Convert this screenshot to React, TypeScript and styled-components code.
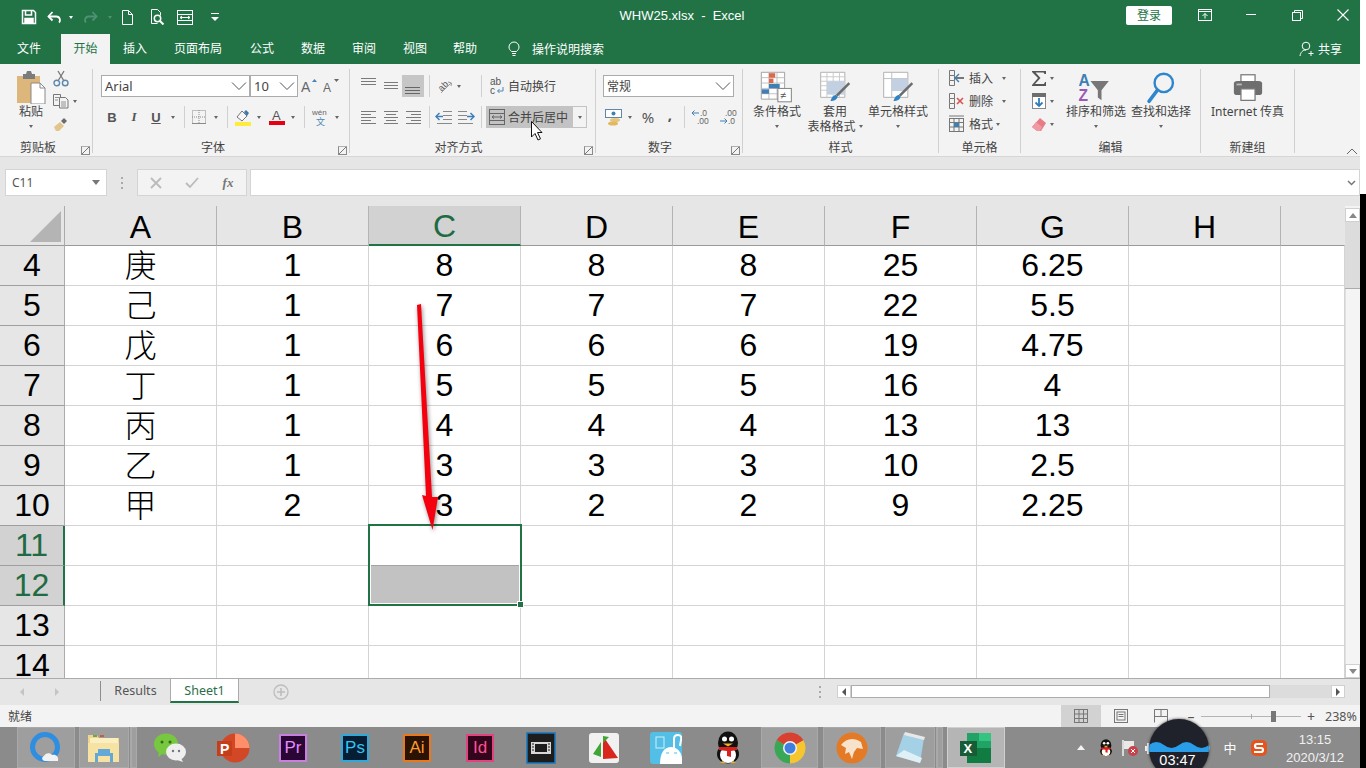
import React from "react";
import styled, { createGlobalStyle } from "styled-components";

const UI = `"Noto Sans","Noto Sans CJK SC",sans-serif`;
const GREEN = "#217346";

const Global = createGlobalStyle`
  html, body { margin: 0; padding: 0; width: 1366px; height: 768px; overflow: hidden; background: #fff; }
  * { box-sizing: border-box; }
`;

const Screen = styled.div`
  position: relative; display: flex; width: 1366px; height: 768px; overflow: hidden;
  font-family: ${UI}; font-size: 12px; color: #444;
`;
const Win = styled.div`display: flex; flex-direction: column; width: 1360px; height: 768px; flex: none;`;
const EdgeStrip = styled.div`width: 6px; height: 768px; flex: none; background: linear-gradient(#fff 194px, #000 194px);`;

/* title bar */
const TitleBar = styled.div`height: 34px; background: ${GREEN}; display: flex; align-items: center; color: #fff; flex: none;`;
const QatSlot = styled.div<{ $w: number }>`width: ${p => p.$w}px; height: 24px; display: flex; align-items: center; justify-content: center; flex: none;`;
const TitleText = styled.div`width: 270px; margin-left: 313px; text-align: center; font-family: "Liberation Sans", sans-serif; font-size: 13px; white-space: pre; margin-top: -4px; flex: none;`;
const SignIn = styled.div`width: 46px; height: 19px; margin-left: 309px; margin-top: -3px; background: #fff; border-radius: 2px; color: ${GREEN}; text-align: center; line-height: 19px; font-size: 12px; flex: none;`;
const WinBtn = styled.div<{ $ml?: number }>`width: 46px; height: 24px; margin-left: ${p => p.$ml || 0}px; margin-top: -4px; display: flex; align-items: center; justify-content: center; flex: none;`;

/* tabs */
const TabBar = styled.div`height: 30px; background: ${GREEN}; display: flex; color: #fff; flex: none;`;
const Tab = styled.div<{ $w: number; $active?: boolean }>`
  width: ${p => p.$w}px; flex: none; text-align: center; line-height: 29px; font-size: 12px;
  background: ${p => (p.$active ? "#f3f3f3" : "transparent")}; color: ${p => (p.$active ? GREEN : "#fff")};
`;
const TellMe = styled.div`display: flex; align-items: center; margin-left: 18px; width: 115px; gap: 12px; height: 29px; white-space: nowrap; flex: none;`;
const Share = styled.div`display: flex; align-items: center; gap: 3px; margin-left: 676px; height: 29px; white-space: nowrap; flex: none;`;

/* ribbon */
const Ribbon = styled.div`height: 93px; background: #f3f3f3; border-bottom: 1px solid #d6d6d6; display: flex; position: relative; flex: none;`;
const Group = styled.div<{ $w: number }>`
  width: ${p => p.$w}px; flex: none; height: 84px; margin-top: 5px; border-right: 1px solid #d0d0d0;
  display: grid; grid-template-rows: 69px 15px; position: relative;
`;
const GroupBody = styled.div`display: flex; min-width: 0; overflow: visible;`;
const GroupLabel = styled.div<{ $pr?: number }>`position: relative; display: flex; justify-content: center; align-items: center; height: 15px; font-size: 12px; color: #444; line-height: 15px; margin-top: 2px; padding-right: ${p => p.$pr || 0}px;`;
const Launcher = styled.span`position: absolute; right: 2px; bottom: 0; width: 9px; height: 9px; border: 1px solid #8a8a8a; border-top-color:#b0b0b0; background: linear-gradient(135deg, transparent 45%, #777 45%, #777 55%, transparent 55%);`;
const Stack = styled.div<{ $pad?: number }>`display: flex; flex-direction: column; padding-left: ${p => p.$pad || 0}px; flex: none;`;
const TwoRows = styled(Stack)`padding-top: 6px; gap: 9px;`;
const Line = styled.div`display: flex; align-items: center; height: 22px; flex: none;`;
const ThreeRows = styled(Stack)`gap: 5px;`;
const ThinLine = styled.div`display: flex; align-items: center; height: 18px; flex: none;`;
const Slot = styled.div<{ $w: number; $on?: boolean }>`width: ${p => p.$w}px; height: 22px; flex: none; display: flex; align-items: center; justify-content: center; background: ${p => (p.$on ? "#c6c6c6" : "transparent")};`;
const PercentSlot = styled(Slot)`font-size: 15px; color: #555;`;
const CommaSlot = styled(Slot)`font-size: 15px; font-weight: 700; color: #555; padding-bottom: 6px;`;
const Sep = styled.span<{ $l?: number; $r?: number }>`width: 1px; height: 22px; background: #d0d0d0; flex: none; margin: 0 ${p => p.$r ?? 5}px 0 ${p => p.$l ?? 5}px;`;
const Caret = styled.span`width: 0; height: 0; border-left: 2.5px solid transparent; border-right: 2.5px solid transparent; border-top: 3px solid #666; display: inline-block; flex: none;`;
const QatCaret = styled.span<{ $dim?: boolean }>`width: 0; height: 0; border-left: 2.5px solid transparent; border-right: 2.5px solid transparent; border-top: 3px solid ${p => (p.$dim ? "#4f9272" : "#fff")}; display: inline-block; flex: none;`;
const CaretSlot = styled.div<{ $w?: number }>`width: ${p => p.$w || 10}px; height: 22px; display: flex; align-items: center; justify-content: center; flex: none;`;
const Select = styled.div<{ $w: number; $small?: boolean }>`
  width: ${p => p.$w}px; height: 22px; flex: none; background: #fff; border: 1px solid #ababab;
  display: flex; align-items: center; justify-content: space-between; padding: 0 2px 0 3px; font-size: ${p => (p.$small ? 12 : 13)}px; color: #444;
`;
const BoldBtn = styled.span<{ $i?: boolean; $u?: boolean }>`
  font-family: "Liberation ${p => (p.$i ? "Serif" : "Sans")}", serif; font-weight: 700; font-style: ${p => (p.$i ? "italic" : "normal")};
  font-size: 13px; color: #555; text-decoration: ${p => (p.$u ? "underline" : "none")};
`;
const LargeBtn = styled.div<{ $w: number; $pl?: number; $ml?: number }>`width: ${p => p.$w}px; margin-left: ${p => p.$ml || 0}px; padding: 2px 0 0 ${p => p.$pl || 0}px; display: flex; flex-direction: column; align-items: center; flex: none;`;
const LargeIcon = styled.div`height: 33px; display: flex; align-items: center; justify-content: center; flex: none;`;
const LargeText = styled.div`font-size: 12px; line-height: 15px; text-align: center; white-space: nowrap; display: flex; flex-direction: column; align-items: center;`;
const TextRow = styled.div`display: flex; align-items: center; gap: 3px; height: 15px; justify-content: center; white-space: nowrap;`;
const CaretRow = styled.div`height: 15px; display: flex; align-items: center; justify-content: center;`;
const MergeBtn = styled.div`width: 101px; height: 22px; display: flex; align-items: center; background: #c3c3c3; flex: none; gap: 3px; padding-left: 3px; position: relative;`;
const MergeDrop = styled.div`position: absolute; right: 0; top: 0; width: 15px; height: 22px; background: #f3f3f3; border: 1px solid #c3c3c3; display: flex; align-items: center; justify-content: center;`;
const Wrap = styled.div`display: flex; align-items: center; gap: 3px; height: 22px; white-space: nowrap; padding-left: 3px;`;
const CellRow = styled(ThinLine)`gap: 3px; white-space: nowrap;`;
const Collapse = styled.div`position: absolute; right: 2px; bottom: 1px; width: 12px; height: 8px; display: flex;`;

/* formula bar */
const FormulaBar = styled.div`height: 49px; background: #e6e6e6; display: flex; padding-top: 12px; flex: none;`;
const NameBox = styled.div`width: 102px; height: 27px; margin-left: 5px; background: #fff; border: 1px solid #d4d4d4; display: flex; align-items: center; justify-content: space-between; padding: 0 6px 0 6px; font-size: 12px; color: #555; flex: none;`;
const Dots = styled.div`width: 20px; height: 22px; display: flex; flex-direction: column; align-items: center; justify-content: center; gap: 3px; flex: none;`;
const DotsWide = styled(Dots)`width: 30px; height: 27px;`;
const Dot = styled.span`width: 2px; height: 2px; background: #aaa;`;
const FxBox = styled.div`width: 110px; height: 27px; background: #f3f3f3; border: 1px solid #d4d4d4; display: flex; align-items: center; flex: none;`;
const FxSlot = styled.div`flex: 1; display: flex; align-items: center; justify-content: center; color: #777; font-family: "Liberation Serif", serif; font-style: italic; font-weight: 700; font-size: 13px;`;
const FormulaInput = styled.div`width: 1110px; margin-left: 3px; height: 27px; background: #fff; border: 1px solid #d4d4d4; display: flex; align-items: center; justify-content: flex-end; padding-right: 3px; flex: none;`;

/* sheet */
const SheetArea = styled.div`height: 472px; display: flex; background: #e6e6e6; flex: none;`;
const GridClip = styled.div`width: 1345px; height: 472px; overflow: hidden; flex: none; position: relative;`;
const Grid = styled.div`
  display: grid; grid-template-columns: 65px repeat(8, 152px) 64px; grid-auto-rows: 40px; background: #fff;
  font-family: "Liberation Sans", sans-serif; font-size: 32px; color: #000;
`;
const Corner = styled.div`background: #e6e6e6; border-right: 1px solid #ababab; border-bottom: 1px solid #9a9a9a; display: flex; align-items: flex-end; justify-content: flex-end; padding: 0 3px 3px 0;`;
const ColHead = styled.div<{ $sel?: boolean; $end?: boolean }>`
  display: flex; align-items: center; justify-content: center; padding-top: 3px;
  background: ${p => (p.$sel ? "#d2d2d2" : "#e6e6e6")}; color: ${p => (p.$sel ? "#1f6b43" : "#000")};
  border-right: 1px solid ${p => (p.$end ? "transparent" : "#b4b4b4")};
  border-bottom: ${p => (p.$sel ? `2px solid ${GREEN}` : "1px solid #9a9a9a")};
`;
const RowHead = styled.div<{ $sel?: boolean }>`
  display: flex; align-items: center; justify-content: center; line-height: 1; padding-bottom: 2px;
  background: ${p => (p.$sel ? "#d2d2d2" : "#e6e6e6")}; color: ${p => (p.$sel ? "#1f6b43" : "#000")};
  border-right: ${p => (p.$sel ? `2px solid ${GREEN}` : "1px solid #ababab")}; border-bottom: 1px solid #9f9f9f;
`;
const Cell = styled.div<{ $cjk?: boolean }>`
  display: flex; align-items: center; justify-content: center; background: #fff; line-height: 1;
  border-right: 1px solid #d4d4d4; border-bottom: 1px solid #d4d4d4;
  padding-bottom: ${p => (p.$cjk ? 6 : 2)}px;
  font-family: ${p => (p.$cjk ? `"Noto Sans CJK SC", sans-serif` : `"Liberation Sans", sans-serif`)};
  font-weight: ${p => (p.$cjk ? 300 : 400)};
`;
const Selection = styled.div`
  grid-column: 4; grid-row: 9 / span 2; margin: -2px -1px 0 -1px; border: 2px solid ${GREEN}; position: relative; z-index: 2; background: #fff;
  display: grid; grid-template-rows: 1fr 1fr; padding: 0 1px 1px 1px;
`;
const SelGray = styled.div`grid-row: 2; background: #c2c2c2; border-top: 1px solid #a4a4a4;`;
const Handle = styled.span`position: absolute; right: -4px; bottom: -4px; background: ${GREEN}; border: 1px solid #fff; box-sizing: content-box; width: 5px; height: 5px;`;

const VScroll = styled.div`width: 15px; height: 472px; flex: none; display: flex; flex-direction: column; background: #f3f3f3; padding-top: 2px;`;
const ScrollBtn = styled.div`width: 15px; height: 14px; background: #fff; border: 1px solid #d0d0d0; display: flex; align-items: center; justify-content: center; flex: none;`;
const VThumb = styled.div`height: 67px; background: #dcdcdc; border-bottom: 1px solid #ababab; flex: none;`;
const VTrack = styled.div`flex: 1; background: #f4f4f4; border-left: 1px solid #e0e0e0;`;

/* sheet tabs */
const SheetTabs = styled.div`height: 27px; background: #e6e6e6; border-top: 1px solid #ababab; display: flex; align-items: flex-start; flex: none;`;
const NavSlot = styled.div<{ $w: number }>`width: ${p => p.$w}px; height: 25px; display: flex; align-items: center; justify-content: center; flex: none;`;
const TabSep = styled.span`width: 1px; height: 20px; margin-top: 2px; background: #8e8e8e; flex: none;`;
const SheetTab = styled.div<{ $active?: boolean; $w: number }>`
  width: ${p => p.$w}px; height: 24px; flex: none; text-align: center; line-height: 23px; font-size: 12.5px;
  color: ${p => (p.$active ? "#2b6e4a" : "#555")}; background: ${p => (p.$active ? "#fff" : "transparent")};
  border-bottom: ${p => (p.$active ? `2px solid ${GREEN}` : "none")};
  border-right: ${p => (p.$active ? "1px solid #ababab" : "none")}; border-left: ${p => (p.$active ? "1px solid #ababab" : "none")};
`;
const HScroll = styled.div`width: 508px; height: 13px; margin-top: 6px; display: flex; flex: none; background: #dcdcdc;`;
const HBtn = styled.div`width: 14px; height: 13px; background: #fff; border: 1px solid #d0d0d0; display: flex; align-items: center; justify-content: center; flex: none;`;
const HThumb = styled.div`width: 419px; height: 13px; background: #fff; border: 1px solid #ababab; flex: none;`;
const HGap = styled.div`flex: 1;`;
const Tri = styled.span<{ $d: "l" | "r" | "u" | "d"; $c?: string }>`
  width: 0; height: 0; display: inline-block; flex: none;
  ${p => p.$d === "l" && `border-top:4px solid transparent;border-bottom:4px solid transparent;border-right:4px solid ${p.$c || "#999"};`}
  ${p => p.$d === "r" && `border-top:4px solid transparent;border-bottom:4px solid transparent;border-left:4px solid ${p.$c || "#999"};`}
  ${p => p.$d === "u" && `border-left:4px solid transparent;border-right:4px solid transparent;border-bottom:5px solid ${p.$c || "#888"};`}
  ${p => p.$d === "d" && `border-left:4px solid transparent;border-right:4px solid transparent;border-top:5px solid ${p.$c || "#888"};`}
`;

/* status */
const StatusBar = styled.div`height: 22px; background: #f3f3f3; display: flex; align-items: center; flex: none; font-size: 12px; color: #444;`;
const StatusText = styled.div`width: 1061px; padding-left: 8px; flex: none;`;
const ViewBtn = styled.div<{ $on?: boolean }>`width: 40px; height: 22px; flex: none; display: flex; align-items: center; justify-content: center; background: ${p => (p.$on ? "#d2d2d2" : "transparent")};`;
const ZoomMark = styled.div`width: 20px; text-align: center; font-size: 14px; color: #555; flex: none;`;
const ZoomTrack = styled.div`width: 100px; height: 1px; background: #b4b4b4; position: relative; flex: none;`;
const ZoomThumb = styled.span`position: absolute; left: 70px; top: -5px; width: 5px; height: 11px; background: #777;`;
const ZoomTick = styled.span`position: absolute; left: 50px; top: -2px; width: 1px; height: 5px; background: #aaa;`;
const ZoomText = styled.div`margin-left: 4px; color: #555; font-size: 12.5px; white-space: nowrap;`;

/* taskbar */
const Taskbar = styled.div`height: 41px; background: #8b8b8b; display: flex; align-items: stretch; flex: none; color: #fff;`;
const TaskItem = styled.div<{ $w: number; $ml?: number; $st?: "on" | "hot" }>`
  width: ${p => p.$w}px; margin-left: ${p => p.$ml || 0}px; flex: none; display: flex; align-items: center; justify-content: center; position: relative;
  background: ${p => (p.$st === "on" ? "#9e9e9e" : p.$st === "hot" ? "#b5b5b5" : "transparent")};
  border: ${p => (p.$st === "on" ? "1px solid #a9a9a9" : p.$st === "hot" ? "1px solid #d0d0d0" : "none")};
`;
const TaskStack = styled.div`width: 7px; margin-left: 1px; flex: none; border: 1px solid #a9a9a9; border-left-width: 2px; background: #9e9e9e;`;
const AdobeTile = styled.div<{ $bg: string; $bd: string; $fg: string }>`
  width: 28px; height: 28px; background: ${p => p.$bg}; border: 2px solid ${p => p.$bd}; color: ${p => p.$fg};
  font-family: "Liberation Sans", sans-serif; font-size: 17px; line-height: 24px; text-align: center;
`;
const Tray = styled.div<{ $w: number; $ml?: number }>`width: ${p => p.$w}px; margin-left: ${p => p.$ml || 0}px; flex: none; display: flex; align-items: center; justify-content: center;`;
const Ime = styled.div`font-size: 13px; color: #fff;`;
const Clock = styled.div`width: 80px; margin-left: 4px; text-align: center; font-size: 13px; line-height: 18px; color: #f1f1f1; flex: none; padding-top: 4px; font-family: "Liberation Sans", sans-serif;`;

/* overlays */
const ArrowLayer = styled.svg`position: absolute; left: 400px; top: 295px; z-index: 5; pointer-events: none; filter: drop-shadow(1px 2px 2px rgba(0,0,0,.45));`;
const CursorLayer = styled.svg`position: absolute; left: 530px; top: 120px; z-index: 6;`;
const Timer = styled.div`
  position: absolute; left: 1149px; top: 719px; width: 60px; height: 60px; border-radius: 50%; z-index: 6; overflow: hidden;
  background: #20222b; box-shadow: 0 0 3px #333;
`;
const TimerWave = styled.svg`position: absolute; left: 0; top: 23px;`;
const TimerText = styled.div`position: absolute; left: 0; right: 3px; top: 33px; text-align: center; color: #fff; font-size: 14.5px; font-family: "Liberation Sans", sans-serif;`;
const Mirrored = styled.svg`transform: scaleX(-1);`;

/* --- icons --- */
const Chev = ({ c = "#555" }: { c?: string }) => (
  <svg width="16" height="10" viewBox="0 0 16 10"><path d="M1 1.500 8 8.500 15 1.500" fill="none" stroke={c} strokeWidth="1" /></svg>
);
const SmallChev = () => (
  <svg width="9" height="6" viewBox="0 0 9 6"><path d="M1 1l3.500 3.500L8 1" fill="none" stroke="#777" strokeWidth="1.500" /></svg>
);
const AlignLines = ({ lines, c = "#7a7a7a" }: { lines: number[][]; c?: string }) => (
  <svg width="18" height="18" viewBox="0 0 18 18">{lines.map((l, i) => <path key={i} d={`M${l[0]} ${l[2]}.5H${l[1]}`} stroke={c} fill="none" />)}</svg>
);
const SaveIcon = () => (
  <svg width="16" height="16" viewBox="0 0 16 16" fill="none" stroke="#fff" strokeWidth="1.500">
    <path d="M1.500 1.500h11l2 2v11h-13z" /><path d="M4.500 2v4h6V2" /><path d="M4 14.500V9.500h8v5" fill="#fff" stroke="none" /><path d="M4 14.500V9.500h8v5" />
  </svg>
);
const UndoPaths = () => (<><path d="M1.500 6.500H9a4 4 0 0 1 4 3.500c0 1-.5 2-1 2.500" /><path d="M5.500 2 1.500 6.500 5.500 10.500" /></>);
const UndoIcon = () => <svg width="15" height="14" viewBox="0 0 15 14" fill="none" stroke="#fff" strokeWidth="1.800"><UndoPaths /></svg>;
const RedoIcon = () => <Mirrored width="15" height="14" viewBox="0 0 15 14" fill="none" stroke="#4f9272" strokeWidth="1.800"><UndoPaths /></Mirrored>;
const NewDoc = () => (
  <svg width="13" height="15" viewBox="0 0 13 15" fill="none" stroke="#fff"><path d="M1.500.5h6l4 4v10h-10z" /><path d="M7.500.5v4h4" /></svg>
);
const PreviewIcon = () => (
  <svg width="16" height="16" viewBox="0 0 16 16" fill="none" stroke="#fff"><path d="M2.500 14.500V.5h6l3 3v3" /><path d="M2.500 14.500h6" /><circle cx="8.500" cy="9.500" r="3.200" strokeWidth="1.500" /><path d="M11 12l3.500 3.500" strokeWidth="2" /></svg>
);
const LayoutIcon = () => (
  <svg width="16" height="15" viewBox="0 0 16 15" fill="none" stroke="#fff"><rect x=".5" y=".5" width="15" height="14" /><path d="M.5 4.500h15M.5 10.500h15M3 7.500h10M3 7.500l2-1.500M3 7.500l2 1.500M13 7.500l-2-1.500M13 7.500l-2 1.500" /></svg>
);
const CustomizeIcon = () => (
  <svg width="10" height="9" viewBox="0 0 10 9" fill="#fff"><path d="M1 0h8v1H1z" /><path d="M1 4h8L5 8z" /></svg>
);
const WinRestoreDown = () => (
  <svg width="14" height="12" viewBox="0 0 14 12" fill="none" stroke="#fff"><rect x=".5" y=".5" width="13" height="11" /><path d="M.5 2.500h13" /><path d="M7 9.500V4.500M4.500 7 7 4.500 9.500 7" /></svg>
);
const WinMin = () => <svg width="10" height="2" viewBox="0 0 10 2"><path d="M0 .5h10" stroke="#fff" /></svg>;
const WinMax = () => (
  <svg width="11" height="11" viewBox="0 0 11 11" fill="none" stroke="#fff"><rect x=".5" y="2.500" width="8" height="8" /><path d="M2.500 2.500v-2h8v8h-2" /></svg>
);
const WinClose = () => <svg width="12" height="12" viewBox="0 0 12 12"><path d="M.5.5l11 11M11.500.5l-11 11" stroke="#fff" fill="none" strokeWidth="1.100" /></svg>;
const Bulb = () => (
  <svg width="12" height="16" viewBox="0 0 12 16" fill="none" stroke="#fff"><path d="M3.500 10.500C2 9 1 8 1 6a5 5 0 0 1 10 0c0 2-1 3-2.500 4.500z" /><path d="M4 12.500h4M4.500 14.500h3" /></svg>
);
const ShareIcon = () => (
  <svg width="16" height="16" viewBox="0 0 16 16" fill="none" stroke="#fff"><circle cx="7" cy="5" r="3.800" /><path d="M1 15c.5-3.500 2.500-6 6-6" /><path d="M9.500 12.500h5M12 10v5" /></svg>
);
const PasteIcon = () => (
  <svg width="30" height="33" viewBox="0 0 30 33">
    <path d="M1 5h23v27H1z" fill="#dcb67a" /><path d="M7 3h3l1-3h4l1 3h3v5H7z" fill="#7b7b7b" />
    <path d="M15 12h9l5 5v16H15z" fill="#fff" stroke="#8a8a8a" /><path d="M24 12v5h5" fill="none" stroke="#8a8a8a" />
  </svg>
);
const Scissors = () => (
  <svg width="16" height="17" viewBox="0 0 16 17" fill="none"><path d="M5 1l6 10M11 1 5 11" stroke="#777" strokeWidth="1.300" /><circle cx="3.800" cy="13" r="2.800" stroke="#5d87ad" strokeWidth="1.400" /><circle cx="12.200" cy="13" r="2.800" stroke="#5d87ad" strokeWidth="1.400" /></svg>
);
const CopyIcon = () => (
  <svg width="16" height="16" viewBox="0 0 16 16" fill="#f3f3f3" stroke="#777"><path d="M.5 1.500h7v11h-7z" /><path d="M6.500 4.500h6l2.500 2.500v8H6.500z" /><path d="M2 4.500h4M2 7h3M8 9h5M8 11h5M8 13h5" fill="none" strokeWidth=".8" /></svg>
);
const BrushIcon = () => (
  <svg width="16" height="16" viewBox="0 0 16 16"><path d="M1 11l6-5 4 4-5 5H3z" fill="#e2c48d" /><path d="M8 5l3-3 3 3-3 3z" fill="#6b6b6b" /></svg>
);
const FontUp = ({ up }: { up: boolean }) => (
  <svg width="18" height="16" viewBox="0 0 18 16">
    <text x="0" y="14" fontFamily="Liberation Sans" fontSize={up ? 14 : 12} fill="#666">A</text>
    <path d={up ? "M11 4l2.500-3L16 4z" : "M11 1l2.500 3L16 1z"} fill={up ? "#4b82b4" : "#666"} />
  </svg>
);
const BorderIcon = () => (
  <svg width="14" height="14" viewBox="0 0 14 14" fill="none" stroke="#8a8a8a" strokeDasharray="1 1"><rect x=".5" y=".5" width="13" height="13" /><path d="M7 0v14M0 7h14" /><path d="M0 13.500h14" strokeDasharray="none" /></svg>
);
const FillIcon = () => (
  <svg width="18" height="17" viewBox="0 0 18 17"><path d="M3 8l5-6 5 5-5 5z" fill="#f7f7f7" stroke="#777" /><path d="M10 3l2-2 3 3-2 3z" fill="#3d79ac" /><rect x="1" y="13" width="16" height="4" fill="#ffeb3b" /></svg>
);
const ColorIcon = () => (
  <svg width="16" height="16" viewBox="0 0 16 16"><text x="3" y="11" fontFamily="Liberation Sans" fontSize="13" fill="#555">A</text><rect x="0" y="12" width="16" height="4" fill="#e60012" /></svg>
);
const WenIcon = () => (
  <svg width="18" height="18" viewBox="0 0 18 18"><text x="0" y="7" fontFamily="Liberation Sans" fontSize="8" fill="#666">wén</text><text x="4" y="17" fontFamily="Noto Sans CJK SC" fontSize="9" fill="#4a86b8">文</text></svg>
);
const OrientIcon = () => (
  <svg width="18" height="18" viewBox="0 0 18 18"><text x="2" y="12" transform="rotate(-45 7 9)" fontFamily="Liberation Sans" fontSize="9" fill="#555">ab</text><path d="M5 16 15 6" stroke="#999" /><path d="M12 5l3.500 1L15 9" fill="none" stroke="#999" /></svg>
);
const IndentPaths = () => (<><path d="M8 2.500h9M8 6.500h9M8 10.500h9M2 14.500h15" stroke="#8a8a8a" fill="none" /><path d="M1 7.500h7" stroke="#3f7fb5" strokeWidth="1.500" /><path d="M4.500 4 1 7.500 4.500 11" fill="none" stroke="#3f7fb5" strokeWidth="1.500" /></>);
const IndentIcon = () => <svg width="18" height="16" viewBox="0 0 18 16"><IndentPaths /></svg>;
const OutdentIcon = () => <Mirrored width="18" height="16" viewBox="0 0 18 16"><IndentPaths /></Mirrored>;
const WrapIcon = () => (
  <svg width="15" height="18" viewBox="0 0 15 18"><text x="0" y="8" fontFamily="Liberation Sans" fontSize="10" fill="#555">ab</text><text x="0" y="17" fontFamily="Liberation Sans" fontSize="10" fill="#555">c</text><path d="M13 10v4H8M9.500 12 7.500 14l2 2" fill="none" stroke="#4a86b8" /></svg>
);
const MergeIcon = () => (
  <svg width="16" height="16" viewBox="0 0 16 16" fill="none" stroke="#666"><rect x=".5" y=".5" width="15" height="15" /><path d="M.5 4.500h15M.5 11.500h15M3 8h10M3 8l2-1.500M3 8l2 1.500M13 8l-2-1.500M13 8l-2 1.500" /></svg>
);
const MoneyIcon = () => (
  <svg width="18" height="17" viewBox="0 0 18 17"><rect x=".5" y=".5" width="16" height="8" fill="#fff" stroke="#5d87ad" /><circle cx="8.500" cy="4.500" r="2" fill="#3f7fb5" /><ellipse cx="10" cy="11" rx="5" ry="2" fill="#e6c47d" /><ellipse cx="8" cy="14.500" rx="5" ry="2" fill="#e2b960" /></svg>
);
const DecIcon = ({ a, b, dir }: { a: string; b: string; dir: "l" | "r" }) => (
  <svg width="20" height="18" viewBox="0 0 20 18">
    <text x={dir === "l" ? 9 : 6} y="8" fontFamily="Liberation Sans" fontSize="8.500" fill="#666">{a}</text>
    <text x={dir === "l" ? 6 : 9} y="16" fontFamily="Liberation Sans" fontSize="8.500" fill="#666">{b}</text>
    {dir === "l" ? <path d="M8 5H1M3.500 2.500 1 5l2.500 2.500" stroke="#3f7fb5" fill="none" /> : <path d="M1 13h7M5.500 10.500 8 13l-2.500 2.500" stroke="#3f7fb5" fill="none" />}
  </svg>
);
const CondIcon = () => (
  <svg width="34" height="33" viewBox="0 0 38 36">
    <path d="M1.500 1h26v30h-26z" fill="#fff" stroke="#9a9a9a" /><path d="M1.500 7h26M1.500 13h26M1.500 19h26M1.500 25h26M10 1v30M19 1v30" stroke="#bbb" fill="none" />
    <rect x="10" y="2" width="7" height="5" fill="#d9694a" /><rect x="10" y="8" width="5" height="5" fill="#d9694a" /><rect x="10" y="14" width="12" height="5" fill="#3f7fb5" /><rect x="2" y="20" width="8" height="5" fill="#3f7fb5" />
    <rect x="20" y="19" width="15" height="15" fill="#fff" stroke="#777" /><text x="23" y="31" fontFamily="Liberation Sans" fontSize="12" fill="#555">≠</text>
  </svg>
);
const TableIcon = ({ full }: { full?: boolean }) => (
  <svg width="34" height="33" viewBox="0 0 38 36">
    <path d="M3 1h27v28H3z" fill="#fff" stroke="#aaa" />
    {full ? <path d="M3 8h27M12 1v28" stroke="#bbb" fill="none" /> : <path d="M3 6h27M3 11h27M3 16h27M3 21h27M10 1v28M17 1v28M24 1v28" stroke="#c6c6c6" fill="none" />}
    <rect x={full ? 12 : 10} y={full ? 8 : 11} width={full ? 18 : 20} height={full ? 14 : 15} fill="#c3d0e2" />
    <path d="M34 12 36 14 22 28 20 26z" fill="#6c6c6c" /><path d="M20 26c-3 1-5 3-6 7 4 0 7-1 8-5z" fill="#2f82c4" />
  </svg>
);
const InsIcon = ({ kind }: { kind: "ins" | "del" | "fmt" }) => (
  <svg width="18" height="18" viewBox="0 0 18 18" fill="none" stroke="#777">
    {kind === "fmt" ? (
      <><rect x="1.500" y="3.500" width="14" height="13" /><path d="M1.500 7.500h14M1.500 12h14M6 3.500v13M11 3.500v13M1 1h15" /><rect x="6" y="8" width="5" height="4" fill="#3f7fb5" stroke="none" /></>
    ) : (
      <><path d="M1.500 1.500h5v5h-5zM1.500 6.500v5h5v-5M1.500 11.500v5h5v-5" />{kind === "ins" ? <><path d="M8 9h8" stroke="#777" strokeWidth="2" /><path d="M11 5 7 9l4 4" stroke="#3f7fb5" strokeWidth="1.400" /></> : <path d="M9 6l6 6M15 6l-6 6" stroke="#d9534f" strokeWidth="1.600" />}</>
    )}
  </svg>
);
const SigmaIcon = () => (
  <svg width="16" height="15" viewBox="0 0 16 15"><path d="M1 0h14v3h-1.500l-1-1.500H4.500L9.500 7l-5.500 6h9l1-2H15v4H1v-1l6-7L1 1z" fill="#555" /></svg>
);
const FillDown = () => (
  <svg width="14" height="16" viewBox="0 0 14 16"><rect x=".5" y=".5" width="13" height="15" fill="#fff" stroke="#888" /><rect x="0" y="0" width="14" height="4" fill="#6d6d6d" /><path d="M7 5v8M3.500 9.500 7 13l3.500-3.500" stroke="#2f7cbd" strokeWidth="1.800" fill="none" /></svg>
);
const Eraser = () => (
  <svg width="14" height="13" viewBox="0 0 14 13"><path d="M8 0l6 5-5 8H5L0 9z" fill="#e77b86" /><path d="M0 9l4-5 6 5-2 4H5z" fill="#ef9aa3" /></svg>
);
const SortIcon = () => (
  <svg width="42" height="33" viewBox="0 0 44 36">
    <text x="3" y="16" fontFamily="Liberation Sans" fontWeight="700" fontSize="17" fill="#3f7fb5">A</text>
    <text x="3" y="33" fontFamily="Liberation Sans" fontWeight="700" fontSize="17" fill="#9b59b6">Z</text>
    <path d="M16 11h20l-8 10v11l-4-3v-8z" fill="#777" />
  </svg>
);
const FindIcon = () => (
  <svg width="30" height="33" viewBox="0 0 32 36" fill="none"><circle cx="19" cy="13" r="10" stroke="#2f86cc" strokeWidth="2.600" /><path d="M12 21 3 33" stroke="#2f86cc" strokeWidth="4" strokeLinecap="round" /></svg>
);
const FaxIcon = () => (
  <svg width="30" height="30" viewBox="0 0 34 32"><rect x="9" y="1" width="16" height="12" fill="#fff" stroke="#777" strokeWidth="1.400" /><path d="M1 11q0-3 4-3h24q4 0 4 3v10q0 3-4 3H5q-4 0-4-3z" fill="#6e6e6e" /><rect x="9" y="17" width="16" height="13" fill="#fff" stroke="#777" strokeWidth="1.400" /><rect x="4" y="11" width="6" height="2" fill="#bbb" /></svg>
);
const CornerTri = () => (
  <svg width="31" height="31" viewBox="0 0 31 31"><path d="M31 0v31H0z" fill="#b4b4b4" /></svg>
);
const FxCross = () => <svg width="12" height="12" viewBox="0 0 12 12"><path d="M1 1l10 10M11 1 1 11" stroke="#bbb" strokeWidth="1.800" fill="none" /></svg>;
const FxCheck = () => <svg width="14" height="12" viewBox="0 0 14 12"><path d="M1 6l4 4 8-9" stroke="#bbb" strokeWidth="1.800" fill="none" /></svg>;
const GridView = () => <svg width="14" height="14" viewBox="0 0 14 14" fill="none" stroke="#777"><rect x=".5" y=".5" width="13" height="13" /><path d="M.5 5h13M.5 9.500h13M5 .5v13M9.500 .5v13" /></svg>;
const PageView = () => <svg width="14" height="14" viewBox="0 0 14 14" fill="none" stroke="#777"><rect x=".5" y=".5" width="13" height="13" /><rect x="3" y="3" width="8" height="8" /><path d="M4.500 5.500h5M4.500 7.500h5" /></svg>;
const BreakView = () => <svg width="14" height="14" viewBox="0 0 14 14" fill="none" stroke="#777"><path d="M.5 13.500V.5h13v13M.5 7.500h13M7 .5v7" /></svg>;
const AddSheet = () => <svg width="16" height="16" viewBox="0 0 16 16" fill="none" stroke="#bdbdbd"><circle cx="8" cy="8" r="7" strokeWidth="1.300" /><path d="M8 4v8M4 8h8" strokeWidth="1.600" /></svg>;

/* taskbar art */
const QBrowser = () => (
  <svg width="34" height="36" viewBox="0 0 34 36" fill="none"><circle cx="16" cy="17" r="12.500" stroke="#2f8ee0" strokeWidth="5" /><path d="M16 31c-3 0-4-4-1-5 1-3 6-4 8-1 4-1 7 2 6 6z" fill="#f2f2f2" /></svg>
);
const Folder = () => (
  <svg width="34" height="32" viewBox="0 0 34 32"><path d="M1 3h9l2 3h20v24H1z" fill="#f0d58a" /><path d="M3 6h28v5H3z" fill="#fbeec0" /><rect x="6" y="3" width="4" height="2" fill="#6aa84f" /><rect x="13" y="3" width="4" height="2" fill="#cc5b3c" /><path d="M1 11h31v19H1z" fill="#f6e2a3" /><path d="M11 17h12v4h3v9h-3v-6H11v6H8v-9h3z" fill="#64a8d8" /></svg>
);
const WeChat = () => (
  <svg width="34" height="30" viewBox="0 0 34 30"><ellipse cx="13" cy="11" rx="12" ry="10.500" fill="#77c83f" /><path d="M6 18l-1 6 6-4z" fill="#77c83f" /><circle cx="9" cy="9" r="1.500" fill="#2f6b1a" /><circle cx="17" cy="9" r="1.500" fill="#2f6b1a" /><ellipse cx="23" cy="19" rx="10" ry="8.500" fill="#efefef" /><path d="M28 25l2 4-6-2z" fill="#efefef" /><circle cx="20" cy="18" r="1.200" fill="#777" /><circle cx="26" cy="18" r="1.200" fill="#777" /></svg>
);
const Ppt = () => (
  <svg width="34" height="30" viewBox="0 0 34 30"><circle cx="19" cy="15" r="14.500" fill="#d24726" /><path d="M19 .5A14.500 14.500 0 0 1 33.500 15H19z" fill="#ff8f6b" /><rect x="1" y="8" width="15" height="15" fill="#c43e1c" /><text x="4" y="20.500" fontFamily="Liberation Sans" fontWeight="700" fontSize="14" fill="#fff">P</text></svg>
);
const Film = () => (
  <svg width="30" height="32" viewBox="0 0 30 32"><rect x="1" y="1" width="28" height="30" fill="#1d1d1d" stroke="#1678c2" strokeWidth="1.500" /><rect x="5" y="10" width="20" height="12" fill="#d8d8d8" /><rect x="9" y="12" width="12" height="8" fill="#1d1d1d" /><path d="M6 12h2M6 15h2M6 18h2M22 12h2M22 15h2M22 18h2" stroke="#1d1d1d" /></svg>
);
const Stone = () => (
  <svg width="30" height="30" viewBox="0 0 30 30"><rect width="30" height="30" rx="3" fill="#f1f1f1" /><path d="M14 3 29 25 14 26z" fill="#d8261c" /><path d="M12 9 4 21l8 3z" fill="#3fa535" /><path d="M14 3l6 1-6 6z" fill="#3fa535" /></svg>
);
const Bunny = () => (
  <svg width="32" height="32" viewBox="0 0 32 32"><rect width="32" height="32" rx="3" fill="#53bfe6" /><path d="M10 32c0-12 5-17 11-17s11 5 11 12v5z" fill="#fff" /><path d="M24 17V7q0-4 4-4t3 5l-1 6" fill="none" stroke="#fff" strokeWidth="2" /><rect x="6" y="5" width="8" height="11" fill="none" stroke="#cfeffa" /><path d="M16 21h3M24 21h3" stroke="#53bfe6" /></svg>
);
const Penguin = ({ s = 30 }: { s?: number }) => (
  <svg width={s} height={s * 1.1} viewBox="0 0 30 33"><ellipse cx="15" cy="12" rx="10" ry="11.500" fill="#111" /><ellipse cx="15" cy="23" rx="11" ry="9.500" fill="#111" /><ellipse cx="15" cy="24" rx="8" ry="8" fill="#fff" /><circle cx="11.500" cy="8" r="2.500" fill="#fff" /><circle cx="18.500" cy="8" r="2.500" fill="#fff" /><path d="M10 12.500h10l-5 3z" fill="#f5b021" /><path d="M6 16h18v3l-6 1v6l-4-1v-5l-8-1z" fill="#d8201c" /><path d="M7 32h6l-3-2zM17 32h6l-3-2z" fill="#f5b021" /></svg>
);
const Chrome = () => (
  <svg width="32" height="32" viewBox="0 0 32 32">
    <path d="M16 16 2.580 8.250A15.500 15.500 0 0 1 29.420 8.250z" fill="#d8412f" />
    <path d="M16 16 29.420 8.250A15.500 15.500 0 0 1 16 31.500z" fill="#f7c62f" />
    <path d="M16 16V31.500A15.500 15.500 0 0 1 2.580 8.250z" fill="#3aa757" />
    <circle cx="16" cy="16" r="7" fill="#f3f3f3" /><circle cx="16" cy="16" r="5.500" fill="#3f7fe0" />
  </svg>
);
const CatLogo = () => (
  <svg width="32" height="32" viewBox="0 0 32 32"><circle cx="16" cy="16" r="15.500" fill="#e47a25" /><path d="M5 13c5-7 13-8 20-3l2 7-6-1-3 4-2 7-3-7-4 2 1-6z" fill="#f7e3cc" /></svg>
);
const Notepad = () => (
  <svg width="32" height="34" viewBox="0 0 32 34"><path d="M10 2 30 7 26 32 2 25z" fill="#a4d1e6" /><path d="M11 1l20 5-1 3-20-5z" fill="#e8e8e8" /><path d="M2 25l24 7 2-5-18-8z" fill="#dff0f7" /></svg>
);
const ExcelTask = () => (
  <svg width="34" height="32" viewBox="0 0 34 32"><rect x="8" y="1" width="24" height="30" fill="#21a366" /><rect x="20" y="1" width="12" height="8" fill="#33c481" /><rect x="20" y="9" width="12" height="8" fill="#21a366" /><rect x="8" y="16" width="24" height="15" fill="#107c41" /><rect x="1" y="9" width="17" height="15" fill="#185c37" /><text x="4.500" y="21" fontFamily="Liberation Sans" fontWeight="700" fontSize="13" fill="#fff">X</text></svg>
);
const FlagTray = () => (
  <svg width="18" height="18" viewBox="0 0 18 18"><path d="M2 1v16" stroke="#f3f3f3" strokeWidth="1.500" /><path d="M3 2h10v8H3z" fill="#e9e9e9" /><circle cx="12" cy="12" r="5" fill="#c9414a" /><path d="M10 10l4 4M14 10l-4 4" stroke="#fff" /></svg>
);
const HiddenTray = () => (
  <svg width="76" height="20" viewBox="0 0 76 20"><path d="M5 5h3v3h2v5H8v3H5v-3H3V8h2z" fill="#eee" /><path d="M65 5q4 5 0 10" fill="none" stroke="#eee" strokeWidth="1.300" /></svg>
);
const Sogou = () => (
  <svg width="18" height="18" viewBox="0 0 18 18"><rect x="1" y="1" width="16" height="16" rx="5" fill="#e6531d" /><path d="M13 5H7Q5 5 5 7t2 2h4q2 0 2 2t-2 2H4" fill="none" stroke="#fff" strokeWidth="2.200" /></svg>
);

const COLS = ["A", "B", "C", "D", "E", "F", "G", "H"];
const ROWS: [number, string, string, string, string, string, string, string][] = [
  [4, "庚", "1", "8", "8", "8", "25", "6.25"],
  [5, "己", "1", "7", "7", "7", "22", "5.5"],
  [6, "戊", "1", "6", "6", "6", "19", "4.75"],
  [7, "丁", "1", "5", "5", "5", "16", "4"],
  [8, "丙", "1", "4", "4", "4", "13", "13"],
  [9, "乙", "1", "3", "3", "3", "10", "2.5"],
  [10, "甲", "2", "3", "2", "2", "9", "2.25"],
];

function SheetGrid() {
  return (
    <Grid>
      <Corner><CornerTri /></Corner>
      {COLS.map(c => <ColHead key={c} $sel={c === "C"}>{c}</ColHead>)}
      <ColHead $end />
      {ROWS.map(r => (
        <React.Fragment key={r[0]}>
          <RowHead>{r[0]}</RowHead>
          <Cell $cjk>{r[1]}</Cell>
          {r.slice(2).map((v, i) => <Cell key={i}>{v}</Cell>)}
          <Cell /><Cell />
        </React.Fragment>
      ))}
      {[11, 12, 13, 14].map(r => (
        <React.Fragment key={r}>
          <RowHead $sel={r < 13}>{r}</RowHead>
          {Array.from({ length: 9 }, (_, c) => (r < 13 && c === 2 ? null : <Cell key={c} />))}
        </React.Fragment>
      ))}
      <Selection><SelGray /><Handle /></Selection>
    </Grid>
  );
}

export default function App() {
  return (
    <Screen>
      <Global />
      <Win>
        <TitleBar>
          <QatSlot $w={17} />
          <QatSlot $w={24}><SaveIcon /></QatSlot>
          <QatSlot $w={26}><UndoIcon /></QatSlot>
          <QatSlot $w={8}><QatCaret /></QatSlot>
          <QatSlot $w={31}><RedoIcon /></QatSlot>
          <QatSlot $w={8}><QatCaret $dim /></QatSlot>
          <QatSlot $w={26}><NewDoc /></QatSlot>
          <QatSlot $w={34}><PreviewIcon /></QatSlot>
          <QatSlot $w={22}><LayoutIcon /></QatSlot>
          <QatSlot $w={38}><CustomizeIcon /></QatSlot>
          <TitleText>WHW25.xlsx  -  Excel</TitleText>
          <SignIn>登录</SignIn>
          <WinBtn $ml={10}><WinRestoreDown /></WinBtn>
          <WinBtn><WinMin /></WinBtn>
          <WinBtn><WinMax /></WinBtn>
          <WinBtn><WinClose /></WinBtn>
        </TitleBar>
        <TabBar>
          <Tab $w={58}>文件</Tab>
          <Tab $w={3} />
          <Tab $w={49} $active>开始</Tab>
          <Tab $w={50}>插入</Tab>
          <Tab $w={76}>页面布局</Tab>
          <Tab $w={52}>公式</Tab>
          <Tab $w={50}>数据</Tab>
          <Tab $w={52}>审阅</Tab>
          <Tab $w={50}>视图</Tab>
          <Tab $w={50}>帮助</Tab>
          <TellMe><Bulb /><span>操作说明搜索</span></TellMe>
          <Share><ShareIcon /><span>共享</span></Share>
        </TabBar>
        <Ribbon>
          <Group $w={93}>
            <GroupBody>
              <LargeBtn $w={48} $pl={14}>
                <LargeIcon><PasteIcon /></LargeIcon>
                <LargeText>
                  <TextRow>粘贴</TextRow>
                  <CaretRow><Caret /></CaretRow>
                </LargeText>
              </LargeBtn>
              <ThreeRows $pad={4}>
                <ThinLine><Slot $w={18}><Scissors /></Slot></ThinLine>
                <ThinLine><Slot $w={18}><CopyIcon /></Slot><CaretSlot><Caret /></CaretSlot></ThinLine>
                <ThinLine><Slot $w={18}><BrushIcon /></Slot></ThinLine>
              </ThreeRows>
            </GroupBody>
            <GroupLabel $pr={16}>剪贴板<Launcher /></GroupLabel>
          </Group>
          <Group $w={257}>
            <GroupBody>
              <TwoRows $pad={8}>
                <Line>
                  <Select $w={149}><span>Arial</span><Chev /></Select>
                  <Select $w={48}><span>10</span><Chev /></Select>
                  <Slot $w={24}><FontUp up /></Slot>
                  <Slot $w={20}><FontUp up={false} /></Slot>
                </Line>
                <Line>
                  <Slot $w={22}><BoldBtn>B</BoldBtn></Slot>
                  <Slot $w={22}><BoldBtn $i>I</BoldBtn></Slot>
                  <Slot $w={22}><BoldBtn $u>U</BoldBtn></Slot>
                  <CaretSlot $w={12}><Caret /></CaretSlot>
                  <Sep />
                  <Slot $w={18}><BorderIcon /></Slot>
                  <CaretSlot $w={16}><Caret /></CaretSlot>
                  <Sep $l={3} />
                  <Slot $w={20}><FillIcon /></Slot>
                  <CaretSlot $w={12}><Caret /></CaretSlot>
                  <Slot $w={24}><ColorIcon /></Slot>
                  <CaretSlot $w={8}><Caret /></CaretSlot>
                  <Sep $l={7} />
                  <Slot $w={22}><WenIcon /></Slot>
                  <CaretSlot $w={9}><Caret /></CaretSlot>
                </Line>
              </TwoRows>
            </GroupBody>
            <GroupLabel $pr={16}>字体<Launcher /></GroupLabel>
          </Group>
          <Group $w={246}>
            <GroupBody>
              <TwoRows $pad={8}>
                <Line>
                  <Slot $w={22}><AlignLines lines={[[1, 16, 1], [1, 16, 4], [1, 16, 7]]} /></Slot>
                  <Slot $w={22}><AlignLines lines={[[2, 16, 5], [2, 16, 8], [2, 16, 11]]} /></Slot>
                  <Slot $w={22} $on><AlignLines lines={[[1, 16, 10], [1, 16, 13], [1, 16, 16]]} c="#666" /></Slot>
                  <Sep />
                  <Slot $w={20}><OrientIcon /></Slot>
                  <CaretSlot $w={8}><Caret /></CaretSlot>
                  <Sep $l={18} />
                  <Wrap><WrapIcon /><span>自动换行</span></Wrap>
                </Line>
                <Line>
                  <Slot $w={22}><AlignLines lines={[[1, 16, 3], [1, 11, 6], [1, 16, 9], [1, 11, 12], [1, 16, 15]]} /></Slot>
                  <Slot $w={22}><AlignLines lines={[[2, 16, 3], [4, 14, 6], [2, 16, 9], [4, 14, 12], [2, 16, 15]]} /></Slot>
                  <Slot $w={22}><AlignLines lines={[[2, 17, 3], [7, 17, 6], [2, 17, 9], [7, 17, 12], [2, 17, 15]]} /></Slot>
                  <Sep />
                  <Slot $w={18}><IndentIcon /></Slot>
                  <Slot $w={26}><OutdentIcon /></Slot>
                  <Sep $l={2} $r={4} />
                  <MergeBtn>
                    <MergeIcon /><span>合并后居中</span>
                    <MergeDrop><Caret /></MergeDrop>
                  </MergeBtn>
                </Line>
              </TwoRows>
            </GroupBody>
            <GroupLabel $pr={28}>对齐方式<Launcher /></GroupLabel>
          </Group>
          <Group $w={147}>
            <GroupBody>
              <TwoRows $pad={7}>
                <Line><Select $w={131} $small><span>常规</span><Chev /></Select></Line>
                <Line>
                  <Slot $w={22}><MoneyIcon /></Slot>
                  <CaretSlot $w={10}><Caret /></CaretSlot>
                  <PercentSlot $w={26}>%</PercentSlot>
                  <CommaSlot $w={18}>,</CommaSlot>
                  <Sep />
                  <Slot $w={22}><DecIcon a=".0" b=".00" dir="l" /></Slot>
                  <Slot $w={6} />
                  <Slot $w={22}><DecIcon a=".00" b=".0" dir="r" /></Slot>
                </Line>
              </TwoRows>
            </GroupBody>
            <GroupLabel $pr={18}>数字<Launcher /></GroupLabel>
          </Group>
          <Group $w={196}>
            <GroupBody>
              <LargeBtn $w={66} $pl={2}>
                <LargeIcon><CondIcon /></LargeIcon>
                <LargeText><TextRow>条件格式</TextRow><CaretRow><Caret /></CaretRow></LargeText>
              </LargeBtn>
              <LargeBtn $w={52}>
                <LargeIcon><TableIcon /></LargeIcon>
                <LargeText><TextRow>套用</TextRow><TextRow>表格格式<Caret /></TextRow></LargeText>
              </LargeBtn>
              <LargeBtn $w={74}>
                <LargeIcon><TableIcon full /></LargeIcon>
                <LargeText><TextRow>单元格样式</TextRow><CaretRow><Caret /></CaretRow></LargeText>
              </LargeBtn>
            </GroupBody>
            <GroupLabel>样式</GroupLabel>
          </Group>
          <Group $w={82}>
            <GroupBody>
              <ThreeRows $pad={9}>
                <CellRow><InsIcon kind="ins" /><span>插入</span><CaretSlot $w={16}><Caret /></CaretSlot></CellRow>
                <CellRow><InsIcon kind="del" /><span>删除</span><CaretSlot $w={16}><Caret /></CaretSlot></CellRow>
                <CellRow><InsIcon kind="fmt" /><span>格式</span><Caret /></CellRow>
              </ThreeRows>
            </GroupBody>
            <GroupLabel>单元格</GroupLabel>
          </Group>
          <Group $w={180}>
            <GroupBody>
              <ThreeRows $pad={9}>
                <ThinLine><Slot $w={17}><SigmaIcon /></Slot><CaretSlot $w={10}><Caret /></CaretSlot></ThinLine>
                <ThinLine><Slot $w={17}><FillDown /></Slot><CaretSlot $w={10}><Caret /></CaretSlot></ThinLine>
                <ThinLine><Slot $w={17}><Eraser /></Slot><CaretSlot $w={10}><Caret /></CaretSlot></ThinLine>
              </ThreeRows>
              <LargeBtn $w={64} $ml={7}>
                <LargeIcon><SortIcon /></LargeIcon>
                <LargeText><TextRow>排序和筛选</TextRow><CaretRow><Caret /></CaretRow></LargeText>
              </LargeBtn>
              <LargeBtn $w={64} $ml={1}>
                <LargeIcon><FindIcon /></LargeIcon>
                <LargeText><TextRow>查找和选择</TextRow><CaretRow><Caret /></CaretRow></LargeText>
              </LargeBtn>
            </GroupBody>
            <GroupLabel>编辑</GroupLabel>
          </Group>
          <Group $w={94}>
            <GroupBody>
              <LargeBtn $w={93}>
                <LargeIcon><FaxIcon /></LargeIcon>
                <LargeText><TextRow>Internet 传真</TextRow></LargeText>
              </LargeBtn>
            </GroupBody>
            <GroupLabel>新建组</GroupLabel>
          </Group>
          <Collapse>
            <svg width="12" height="8" viewBox="0 0 12 8"><path d="M1 7l5-5 5 5" stroke="#666" fill="none" /></svg>
          </Collapse>
        </Ribbon>
        <FormulaBar>
          <NameBox><span>C11</span><Tri $d="d" $c="#777" /></NameBox>
          <DotsWide><Dot /><Dot /><Dot /></DotsWide>
          <FxBox>
            <FxSlot><FxCross /></FxSlot>
            <FxSlot><FxCheck /></FxSlot>
            <FxSlot>fx</FxSlot>
          </FxBox>
          <FormulaInput><SmallChev /></FormulaInput>
        </FormulaBar>
        <SheetArea>
          <GridClip><SheetGrid /></GridClip>
          <VScroll>
            <ScrollBtn><Tri $d="u" /></ScrollBtn>
            <VThumb />
            <VTrack />
            <ScrollBtn><Tri $d="d" /></ScrollBtn>
          </VScroll>
        </SheetArea>
        <SheetTabs>
          <NavSlot $w={43}><Tri $d="l" $c="#c4c4c4" /></NavSlot>
          <NavSlot $w={28}><Tri $d="r" $c="#c4c4c4" /></NavSlot>
          <NavSlot $w={29} />
          <TabSep />
          <SheetTab $w={69}>Results</SheetTab>
          <SheetTab $w={69} $active>Sheet1</SheetTab>
          <NavSlot $w={83}><AddSheet /></NavSlot>
          <NavSlot $w={488} />
          <NavSlot $w={20}><Dots><Dot /><Dot /><Dot /></Dots></NavSlot>
          <NavSlot $w={7} />
          <HScroll>
            <HBtn><Tri $d="l" $c="#555" /></HBtn>
            <HThumb />
            <HGap />
            <HBtn><Tri $d="r" $c="#555" /></HBtn>
          </HScroll>
        </SheetTabs>
        <StatusBar>
          <StatusText>就绪</StatusText>
          <ViewBtn $on><GridView /></ViewBtn>
          <ViewBtn><PageView /></ViewBtn>
          <ViewBtn><BreakView /></ViewBtn>
          <ZoomMark>–</ZoomMark>
          <ZoomTrack><ZoomTick /><ZoomThumb /></ZoomTrack>
          <ZoomMark>+</ZoomMark>
          <ZoomText>238%</ZoomText>
        </StatusBar>
        <Taskbar>
          <TaskItem $w={58} $ml={17} $st="on"><QBrowser /></TaskItem>
          <TaskItem $w={50} $ml={4} $st="on"><Folder /></TaskItem>
          <TaskStack />
          <TaskItem $w={66}><WeChat /></TaskItem>
          <TaskItem $w={59}><Ppt /></TaskItem>
          <TaskItem $w={62}><AdobeTile $bg="#2a0634" $bd="#c77fe0" $fg="#e28bff">Pr</AdobeTile></TaskItem>
          <TaskItem $w={62}><AdobeTile $bg="#061e33" $bd="#31a8d8" $fg="#31c5f4">Ps</AdobeTile></TaskItem>
          <TaskItem $w={62}><AdobeTile $bg="#2a1303" $bd="#e8791d" $fg="#ff9a2e">Ai</AdobeTile></TaskItem>
          <TaskItem $w={62} $ml={1}><AdobeTile $bg="#33051c" $bd="#e0447f" $fg="#ff4f97">Id</AdobeTile></TaskItem>
          <TaskItem $w={60}><Film /></TaskItem>
          <TaskItem $w={62} $ml={2}><Stone /></TaskItem>
          <TaskItem $w={62}><Bunny /></TaskItem>
          <TaskItem $w={62}><Penguin /></TaskItem>
          <TaskItem $w={57} $ml={2} $st="on"><Chrome /></TaskItem>
          <TaskItem $w={58} $ml={5} $st="on"><CatLogo /></TaskItem>
          <TaskItem $w={50} $ml={4} $st="on"><Notepad /></TaskItem>
          <TaskStack />
          <TaskItem $w={58} $ml={4} $st="hot"><ExcelTask /></TaskItem>
          <Tray $w={12} $ml={70}><Tri $d="u" $c="#f4f4f4" /></Tray>
          <Tray $w={24} $ml={7}><Penguin s={16} /></Tray>
          <Tray $w={24}><FlagTray /></Tray>
          <Tray $w={76}><HiddenTray /></Tray>
          <Tray $w={24}><Ime>中</Ime></Tray>
          <Tray $w={24} $ml={5}><Sogou /></Tray>
          <Clock>13:15<br />2020/3/12</Clock>
        </Taskbar>
      </Win>
      <EdgeStrip />
      <ArrowLayer width="60" height="245" viewBox="400 295 60 245">
        <path d="M417 305 L421 304 L432 497 L438 497 L432.500 530 L422 495 L426 496z" fill="#f4000e" />
      </ArrowLayer>
      <CursorLayer width="14" height="22" viewBox="0 0 14 22">
        <path d="M1.500 1.500V17L5 13.500 8 20l2.500-1.200L7.500 12.500H12z" fill="#fff" stroke="#111" strokeWidth="1" />
      </CursorLayer>
      <Timer>
        <TimerWave width="60" height="10" viewBox="0 0 60 10"><path d="M0 3q7.500-6 15 0t15 0 15 0 15 0v7H0z" fill="#2a9de8" /></TimerWave>
        <TimerText>03:47</TimerText>
      </Timer>
    </Screen>
  );
}
